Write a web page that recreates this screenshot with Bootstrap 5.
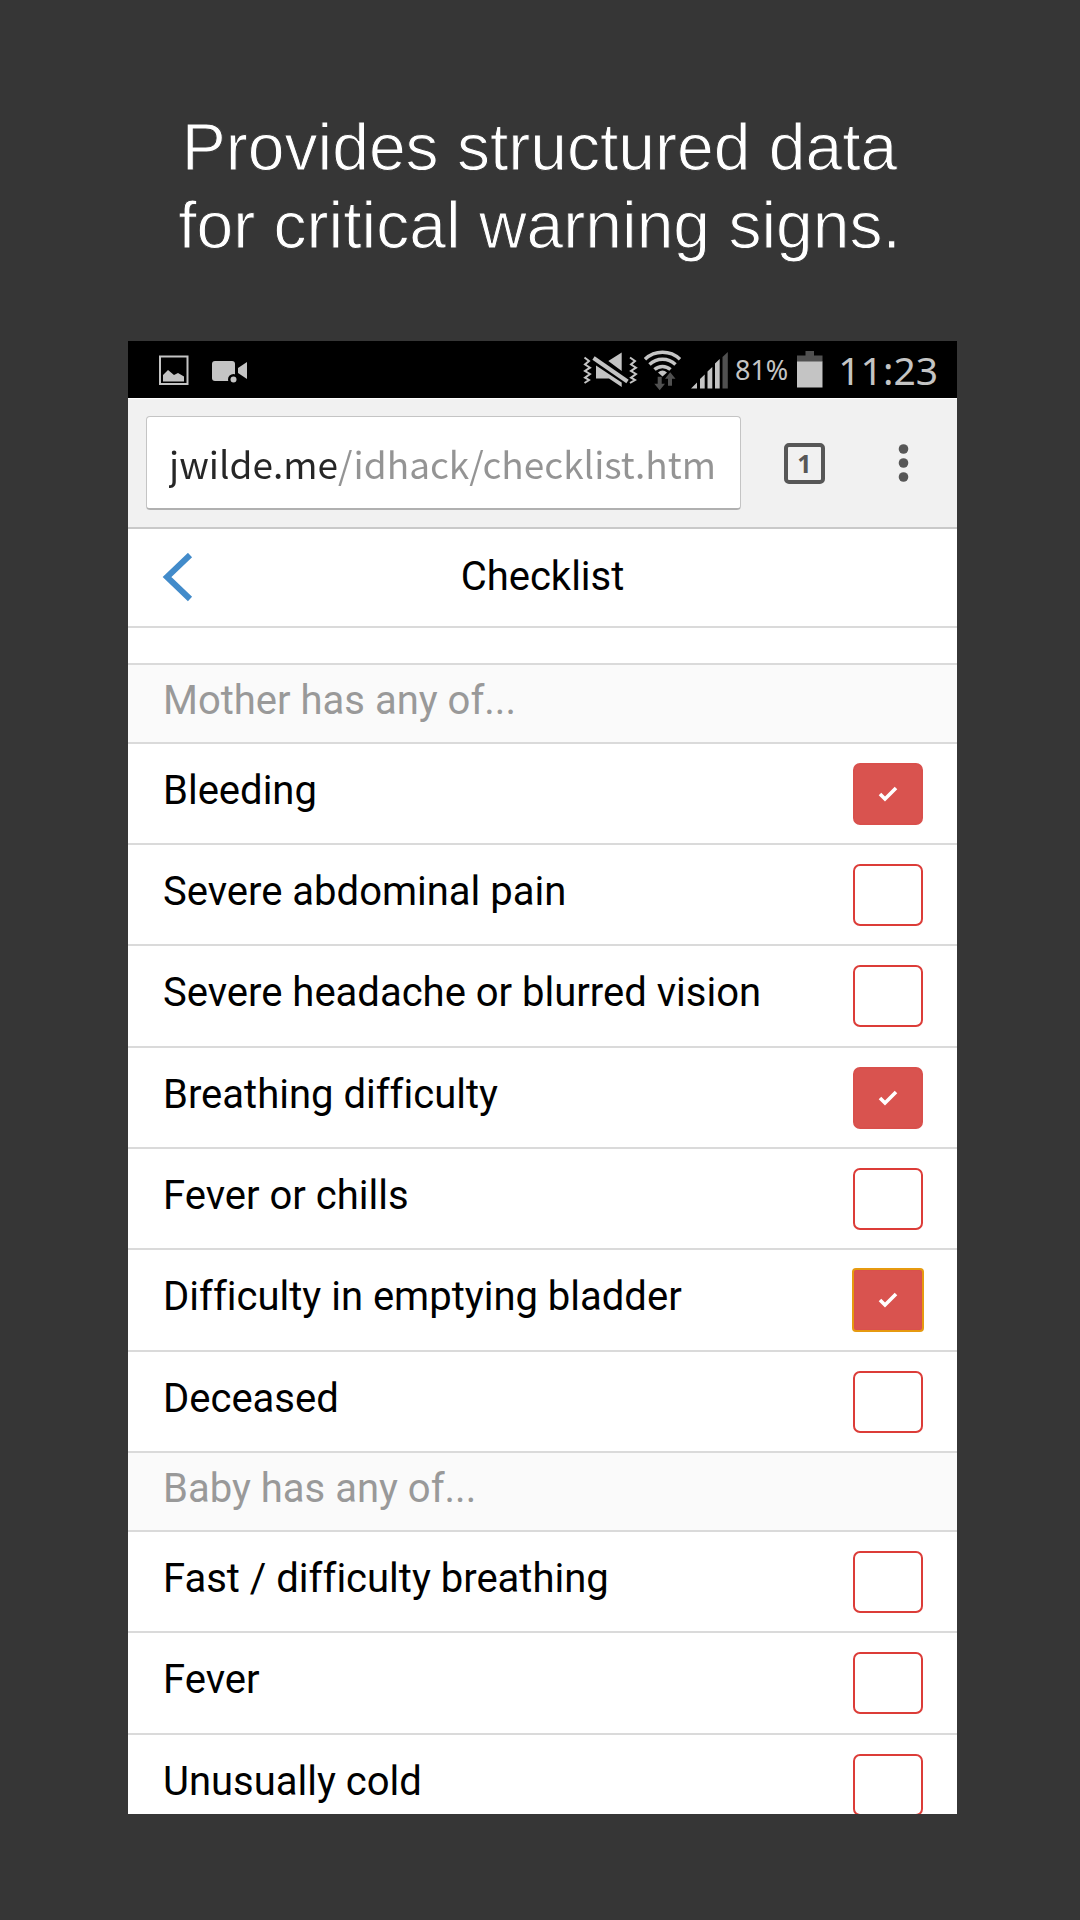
<!DOCTYPE html>
<html lang="en">
<head>
<meta charset="utf-8">
<meta name="viewport" content="width=device-width, initial-scale=1">
<title>Checklist</title>
<link href="https://cdn.jsdelivr.net/npm/bootstrap@5.3.0/dist/css/bootstrap.min.css" rel="stylesheet">
<style>
  body { background: #363636; font-family: Roboto, sans-serif; color: #000; font-variant-ligatures: none; }
  .page { padding: 108px 123px 106px 128px; gap: 77px; }
  .headline { font: 400 66px/78px "Liberation Sans", Arial, sans-serif; color: #fff; -webkit-text-stroke: 1px #363636; margin-right: 6px; }
  .screen { min-height: 0; }
  .status { background: #000; height: 57px; padding: 0 19px 0 31px; color: #c4c4c4; font-family: "Noto Sans", sans-serif; }
  .status svg { height: 42px; display: block; }
  .pct { font-size: 27px; line-height: 40px; }
  .clock { font-size: 39px; line-height: 40px; }
  .browser { background: #f1f1f1; border-top: 1px solid #fff; border-bottom: 2px solid #c9c9c9; padding: 17px 47px 17px 18px; }
  .omnibox { height: 94px; border: 1px solid #c4c4c4; border-bottom: 2px solid #b0b0b0; border-radius: 4px; background: #fff; padding: 0 26px 0 22px; }
  .omnibox input { width: 100%; border: 0; outline: 0; padding: 0; font: 400 37px/60px "Noto Sans CJK SC", sans-serif; color: transparent; background: linear-gradient(90deg, #262626 168px, #949494 168px); -webkit-background-clip: text; background-clip: text; }
  .plain { border: 0; background: none; padding: 0; display: block; }
  .plain svg { display: block; }
  .tabs { width: 41px; height: 41px; margin: 0 72px 0 43px; border: 4px solid #575757; border-radius: 5px; color: #575757; font: 700 25px/33px "Noto Sans", sans-serif; }
  .appbar { height: 99px; border-bottom: 2px solid #dadada; padding: 0 34px; }
  .appbar h1 { font-size: 40px; line-height: 96px; font-weight: 400; }
  .spacer { height: 35px; }
  .group { background: #fafafa; color: #999; border-top: 2px solid #dadada; border-bottom: 2px solid #dadada; font-size: 40px; line-height: 48px; font-weight: 400; padding: 12px 35px 17px; }
  .entry { height: 101px; border-bottom: 2px solid #dadada; padding: 19px 34px 0 35px; }
  .entry:nth-of-type(3n) { height: 102px; }
  .entry + .group { border-top: 0; }
  .entry label { font-size: 40px; line-height: 56px; }
  .tick { appearance: none; flex: none; width: 70px; height: 62px; border: 2px solid #dc3c38; border-radius: 7px; background: #fff center / 20px 18px no-repeat; }
  .tick:checked { border-color: #d9504c; background-color: #d9534f; background-image: url("data:image/svg+xml,%3Csvg xmlns='http://www.w3.org/2000/svg' viewBox='0 0 20 18'%3E%3Cpath d='M2 9l5 5L18 3' fill='none' stroke='%23fff' stroke-width='3.6'/%3E%3C/svg%3E"); }
  .tick.focused { border-radius: 3px; outline: 2px solid #e69a10; outline-offset: -1px; }
</style>
</head>
<body>
<div class="page vh-100 d-flex flex-column">
  <p class="headline text-center text-nowrap mb-0">Provides structured data<br>for critical warning signs.</p>

  <div class="screen flex-grow-1 bg-white overflow-hidden">
    <div class="status d-flex align-items-center">
      <svg width="30" viewBox="0 0 30 42"><rect x="1" y="7.500" width="27.500" height="27.500" fill="none" stroke="#c4c4c4" stroke-width="2"/><path d="M4 32.500V26l5-5 6 5 4-2 6 3.500v5z" fill="#c4c4c4"/></svg>
      <svg class="me-auto" width="60" viewBox="0 0 60 42"><rect x="23" y="12" width="23" height="20" rx="3" fill="#c4c4c4"/><path d="M49 19l9-6v17l-9-6z" fill="#c4c4c4"/><circle cx="44.500" cy="30.500" r="5.500"/><circle cx="44.500" cy="30.500" r="3" fill="#c4c4c4"/></svg>
      <svg width="61" viewBox="0 0 61 42" fill="#c4c4c4"><g fill="none" stroke="#c4c4c4" stroke-width="2"><path d="M1.500 8.500L6 12l-4 3.500 5 3.200-5 3.300 5 3-5 3.700L6 31l-4.500 3M47 8.500l5 3.500-4 3.500 5 3.200-5 3.300 5 3-5 3.700 4 2.300-5 3"/><path d="M10.500 9l34 23.500" stroke-width="4"/></g><path d="M38.700 3.500V22L25.300 12zM13 16.500v13h13l12.700 8.500v-4.500z"/></svg>
      <svg width="46" viewBox="0 0 46 42" fill="#505050"><g fill="none" stroke="#c4c4c4" stroke-width="3.500"><path d="M1 10.300a25.500 25.500 0 0 1 35 0M5.500 15.500a19 19 0 0 1 26 0M10.500 20.500a12 12 0 0 1 16 0"/></g><path d="M14 23.500q4.500-4 9 0l-4.500 4z" fill="#c4c4c4"/><path d="M13.700 27.700h4v7H21l-5.300 6.500-5.400-6.500h3.400zM24 36.700v-7h-3l5.200-6.500 5.300 6.500H28v7z"/></svg>
      <svg width="45" viewBox="0 0 45 42" fill="#c4c4c4"><path d="M1 39.500l6-6v6zM10 39.500V30l4.700-4.500v14zM17.500 39.500V22.500l4.800-4.500v21.500zM25 39.500V14.500l4.700-4.500v29.500z"/><path d="M32.500 39.500V8l5.300-5v36.500z" fill="#505050"/></svg>
      <span class="pct">81%</span>
      <svg class="ms-2" width="42" viewBox="0 0 42 42"><path d="M9.500 2H18v4.500h8.500v6.500H1V6.500h8.500z" fill="#505050"/><path d="M1 12.500h25.500v26H1z" fill="#c4c4c4"/></svg>
      <span class="clock">11:23</span>
    </div>

    <div class="browser d-flex align-items-center">
      <div class="omnibox flex-grow-1 d-flex align-items-center">
        <input type="text" aria-label="Address" value="jwilde.me/idhack/checklist.html">
      </div>
      <button class="plain tabs text-center" aria-label="Open tabs">1</button>
      <button class="plain" aria-label="Menu"><svg width="13" height="38" viewBox="0 0 13 38" fill="#575757"><circle cx="6.500" cy="5" r="4.800"/><circle cx="6.500" cy="19" r="4.800"/><circle cx="6.500" cy="33" r="4.800"/></svg></button>
    </div>

    <header class="appbar d-flex align-items-center justify-content-between">
      <a href="#" aria-label="Back" class="plain"><svg width="32" height="50" viewBox="0 0 32 50"><path d="M28 2L5 24l23 22" fill="none" stroke="#428bca" stroke-width="6"/></svg></a>
      <h1 class="mb-0 align-self-start">Checklist</h1>
      <svg width="32" height="50" aria-hidden="true"></svg>
    </header>
    <div class="spacer"></div>

    <h2 class="group mb-0">Mother has any of...</h2>
    <div class="entry d-flex justify-content-between"><label for="m1">Bleeding</label><input class="tick" type="checkbox" id="m1" checked></div>
    <div class="entry d-flex justify-content-between"><label for="m2">Severe abdominal pain</label><input class="tick" type="checkbox" id="m2"></div>
    <div class="entry d-flex justify-content-between"><label for="m3">Severe headache or blurred vision</label><input class="tick" type="checkbox" id="m3"></div>
    <div class="entry d-flex justify-content-between"><label for="m4">Breathing difficulty</label><input class="tick" type="checkbox" id="m4" checked></div>
    <div class="entry d-flex justify-content-between"><label for="m5">Fever or chills</label><input class="tick" type="checkbox" id="m5"></div>
    <div class="entry d-flex justify-content-between"><label for="m6">Difficulty in emptying bladder</label><input class="tick focused" type="checkbox" id="m6" checked></div>
    <div class="entry d-flex justify-content-between"><label for="m7">Deceased</label><input class="tick" type="checkbox" id="m7"></div>
    <h2 class="group mb-0">Baby has any of...</h2>
    <div class="entry d-flex justify-content-between"><label for="b1">Fast / difficulty breathing</label><input class="tick" type="checkbox" id="b1"></div>
    <div class="entry d-flex justify-content-between"><label for="b2">Fever</label><input class="tick" type="checkbox" id="b2"></div>
    <div class="entry d-flex justify-content-between"><label for="b3">Unusually cold</label><input class="tick" type="checkbox" id="b3"></div>
  </div>
</div>
<script src="https://cdn.jsdelivr.net/npm/bootstrap@5.3.0/dist/js/bootstrap.bundle.min.js"></script>
</body>
</html>
